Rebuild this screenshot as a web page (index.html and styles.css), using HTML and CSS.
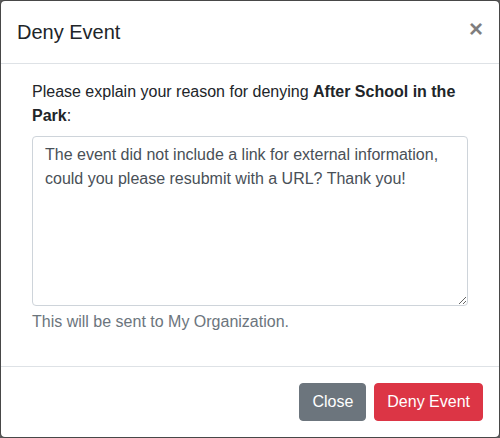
FILE: index.html
```html
<!DOCTYPE html>
<html lang="en">
<head>
<meta charset="utf-8">
<title>Deny Event</title>
<link rel="stylesheet" href="styles.css">
</head>
<body>
<div class="modal">
  <div class="modal-header">
    <h5 class="modal-title">Deny Event</h5>
    <button type="button" class="close" aria-label="Close">&times;</button>
  </div>
  <div class="modal-body">
    <div class="form-group">
      <label class="label" for="reason">Please explain your reason for denying <strong>After School in the Park</strong>:</label>
      <textarea id="reason" class="form-control">The event did not include a link for external information, could you please resubmit with a URL? Thank you!</textarea>
      <div class="form-text">This will be sent to My Organization.</div>
    </div>
  </div>
  <div class="modal-footer">
    <button type="button" class="btn btn-secondary">Close</button>
    <button type="button" class="btn btn-danger">Deny Event</button>
  </div>
</div>
</body>
</html>
```
FILE: styles.css
```css
* { box-sizing: border-box; }
html, body { margin: 0; padding: 0; }
body {
  background: #5b5b5b;
  font-family: "Liberation Sans", Arial, sans-serif;
  font-size: 16px;
  line-height: 1.5;
  color: #212529;
}
.modal {
  width: 500px;
  height: 438px;
  background: #fff;
  border: 1px solid rgba(0,0,0,.2);
  border-radius: 5px;
  display: flex;
  flex-direction: column;
  background-clip: padding-box;
}
.modal-header {
  display: flex;
  align-items: flex-start;
  justify-content: space-between;
  padding: 16px;
  border-bottom: 1px solid #dee2e6;
}
.modal-title {
  margin: 0;
  font-size: 20px;
  font-weight: 400;
  line-height: 1.5;
}
.close {
  padding: 16px;
  margin: -16px -16px -16px auto;
  background: transparent;
  border: 0;
  font-family: inherit;
  font-size: 24px;
  font-weight: 700;
  line-height: 1;
  color: #000;
  opacity: .5;
  text-shadow: 0 1px 0 #fff;
  cursor: pointer;
}
.modal-body {
  padding: 16px 31px;
  flex: 1;
}
.form-group { margin-bottom: 16px; }
.label {
  display: inline-block;
  margin-bottom: 8px;
}
.label strong { font-weight: 700; }
.form-control {
  display: block;
  width: 100%;
  height: 170px;
  padding: 6px 12px;
  font-family: inherit;
  font-size: 16px;
  line-height: 1.5;
  color: #495057;
  background: #fff;
  border: 1px solid #ced4da;
  border-radius: 4px;
  margin: 0;
  resize: vertical;
}
.form-text {
  margin-top: 4px;
  color: #6c757d;
}
.modal-footer {
  display: flex;
  justify-content: flex-end;
  align-items: center;
  padding: 12px;
  border-top: 1px solid #dee2e6;
}
.btn {
  margin: 4px;
  padding: 6px 12px;
  font-family: inherit;
  font-size: 16px;
  line-height: 1.5;
  border: 1px solid transparent;
  border-radius: 4px;
  color: #fff;
  cursor: pointer;
}
.btn-secondary { background: #6c757d; border-color: #6c757d; }
.btn-danger { background: #dc3545; border-color: #dc3545; }
```
